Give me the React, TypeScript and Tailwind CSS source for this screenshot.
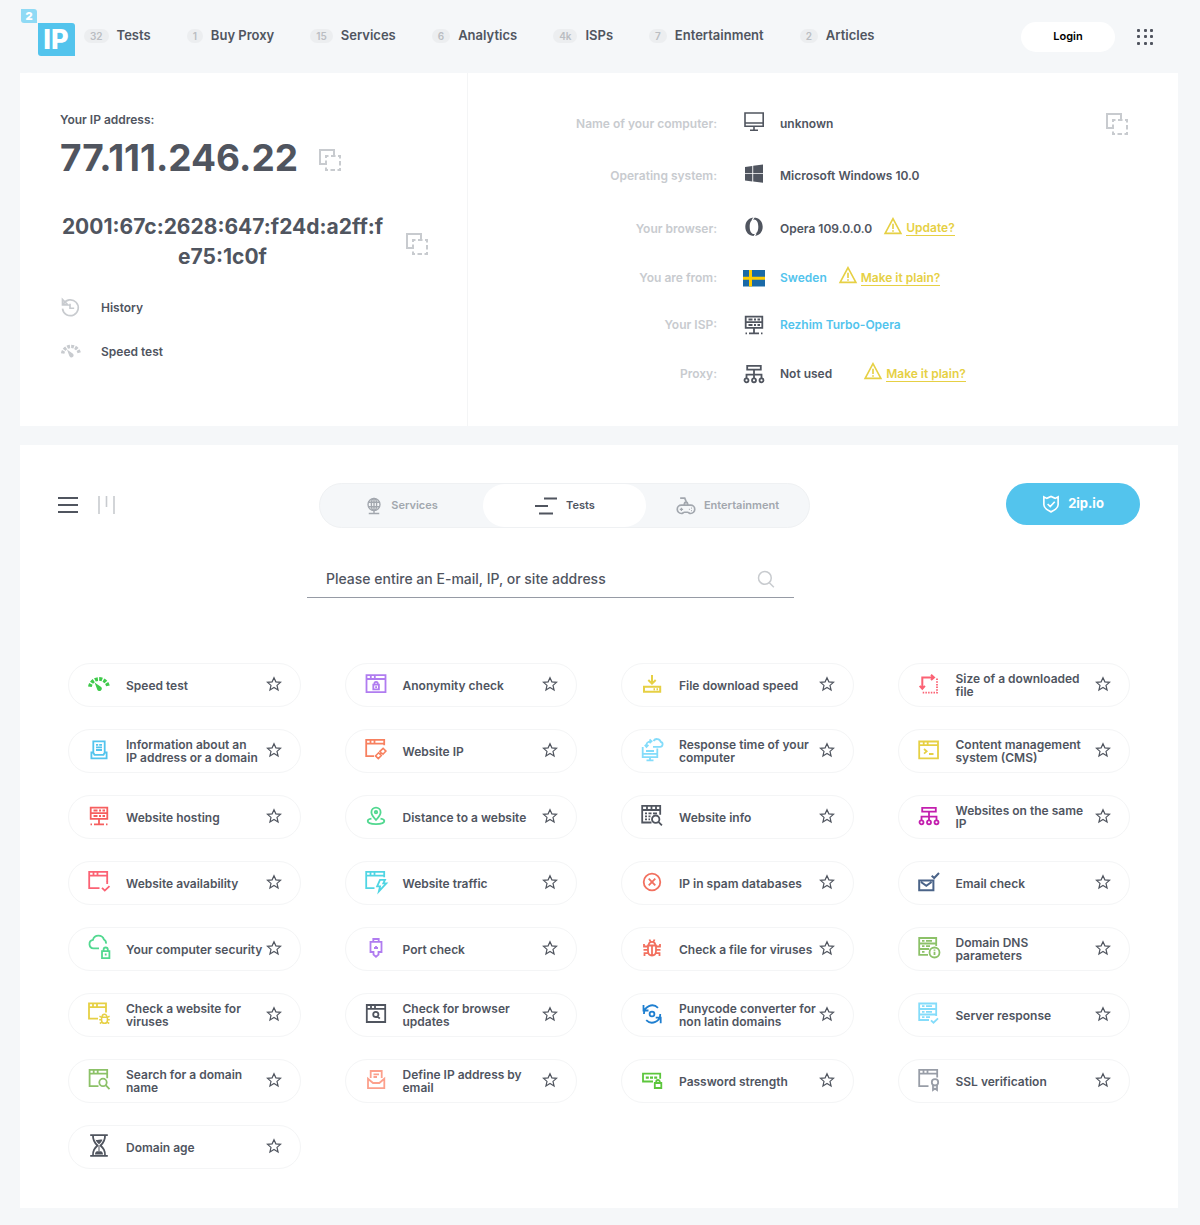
import React, { useState } from 'react';

interface IconProps {
  size?: number;
  className?: string;
  children: React.ReactNode;
}

const Icon: React.FC<IconProps> = ({ size = 24, className = '', children }) => (
  <svg
    width={size}
    height={size}
    viewBox="0 0 24 24"
    fill="none"
    stroke="currentColor"
    strokeWidth={1.8}
    aria-hidden="true"
    className={`shrink-0 overflow-visible ${className}`}
  >
    {children}
  </svg>
);

// browser window with the bottom right corner left open
const openWindow = (
  <path d="M12.5 18.2H2.2V1.8h18v9.7M2.2 5.6h18M6.5 1.8v3.8M10.5 1.8v3.8" />
);

const closedWindow = (
  <path d="M2.5 3.2h19v17h-19zM2.5 7h19M6.8 3.2V7M10.8 3.2V7" />
);

const lens = (
  <path d="M16 10.7a3.7 3.7 0 1 0 0 7.4a3.7 3.7 0 0 0 0-7.4zM18.7 17.1l3.8 4" />
);

const icons = {
  gauge: (
    <>
      <path d="M2.9 14.8a9.2 9.2 0 0 1 18.2 0" strokeWidth={3.8} strokeDasharray="3.1 1.3" />
      <path d="M7.6 10.4l6.2 4.3a2.4 2.4 0 1 1-3.6 2.8z" fill="currentColor" stroke="none" />
    </>
  ),
  document: (
    <>
      <path d="M6.3 14V3.4h11.4V14M9 6.8h2.2M12.2 6.8H15M9 9.4h6M9 12h6" />
      <path d="M6.2 14.5H4.4v5.8h15.2v-5.8h-1.8l-1.3 2.3H7.5z" />
    </>
  ),
  server: (
    <>
      <path d="M3.7 3.7h16.6v11.1H3.7zM3.7 9.2h16.6M12 15v5.2" />
      <path d="M6.5 6.5h4M12 6.5h2M15.5 6.5H18M6.5 12h4M12 12h2M15.5 12H18M3.5 20.3H5M7 20.3h10M19 20.3h1.5" />
    </>
  ),
  windowCheck: (
    <>
      {openWindow}
      <path d="M20.2 11v3M15 17.8l2.8 2.8 4.7-4.5" />
    </>
  ),
  cloudLock: (
    <>
      <path d="M12 12.4H6.5a4.3 4.3 0 0 1-.6-8.5A5.8 5.8 0 0 1 17 3.6a4.2 4.2 0 0 1 2 4" />
      <path d="M15 15.2h7.4v7H15zM16.6 15v-1.4a2.1 2.1 0 0 1 4.2 0V15M18.7 17.6v2" />
    </>
  ),
  windowBug: (
    <>
      <path d="M11 16.7H2V1.4h17v9M2 5.1h17M6 1.4v3.7M10 1.4v3.7" />
      <path
        d="M14.6 15.2h5.8v3.2a2.9 2.9 0 0 1-5.8 0zM15.2 14.6a2.3 2.3 0 0 1 4.6 0M12.4 14.3l2 .8M22.6 14.3l-2 .8M12.2 17.8h2.4M20.4 17.8h2.4M12.8 21.5l2-1.3M22.200 21.5l-2-1.3"
        strokeWidth={1.5}
      />
    </>
  ),
  windowLens: (
    <>
      <path d="M11.5 18.2H2.6V1.8h17.6v8.4M2.6 5.6h17.6M6.7 1.8v3.8M10.7 1.8v3.8" />
      {lens}
    </>
  ),
  hourglass: (
    <>
      <path d="M3.2 1.2h17.6M3.2 21.8h17.6M6 1.2c-.3 5.5 1.7 7.7 4.5 10.3C7.7 14.2 5.7 16.3 6 21.8M18 1.2c.3 5.5-1.7 7.7-4.5 10.3 2.8 2.7 4.8 4.8 4.5 10.3" />
      <path
        d="M8.5 5.5c2 1.5 4-.8 7 .3-.7 2-2 3-3.500 4.5-1.500-1.400-2.800-2.500-3.500-4.800zM8 20.500c.2-3.500 2-3.200 4-3.200s3.800-.3 4 3.200z"
        fill="currentColor"
        stroke="none"
      />
      <path d="M12 12v5" strokeWidth={1} />
    </>
  ),
  windowLock: (
    <>
      {closedWindow}
      <path d="M9.3 12.7h5.6v4.7H9.300zM10.400 12.500v-1a1.700 1.700 0 0 1 3.400 0v1M12.100 14.300v1.600" />
    </>
  ),
  windowLink: (
    <>
      <path d="M10 18.2H2.2V1.8h18v5.4M2.2 5.6h18M6.5 1.8v3.8M10.5 1.8v3.8" />
      <path
        d="M17.2 14.6l-1.300-1.300 3.200-3 2.800 2.800-2.900 3.100-1.300-1.200M16 16.300l1.300 1.200-3 3.100-2.800-2.700 3.100-3.100 1.200 1.200M15.600 16.800l2.300-2.200"
        strokeWidth={1.6}
      />
    </>
  ),
  pin: (
    <>
      <path d="M12 16c-2.500-2.700-4.600-5-4.600-7.800a4.600 4.600 0 0 1 9.200 0c0 2.800-2.100 5.100-4.600 7.800z" />
      <circle cx="12" cy="8.2" r="1.2" />
      <path d="M7.500 14.700c-2.300.4-3.800 1.200-3.800 2.300 0 1.800 3.600 3.100 8.300 3.100s8.300-1.300 8.300-3.100c0-1.100-1.500-1.900-3.800-2.300" />
    </>
  ),
  windowBolt: (
    <>
      <path d="M10.5 18.2H2.2V1.8h18v5.4M2.2 5.6h18M6.5 1.8v3.8M10.5 1.8v3.8" />
      <path d="M16 9.8h5l-1.700 3.500h3l-7.400 8 1.200-5h-3z" />
    </>
  ),
  port: (
    <path d="M9.300 5.500V3h5.400v2.500M6.500 5.800h11V16h-3v2.500l-2.500 2.300-2.500-2.300V16h-3zM10 12h4M12 10v2" />
  ),
  windowUpdate: (
    <>
      <path d="M2.8 3h18.4v17H2.8zM2.8 6.8h18.4M7 3v3.8M11 3v3.8" />
      <path d="M11.8 9.8a2.600 2.600 0 1 0 0 5.200a2.600 2.600 0 0 0 0-5.200zM13.600 14.400l2.200 2.300" />
    </>
  ),
  mailOpen: (
    <path d="M6.700 10V3h11v7M9.500 6.300H15M9.500 9H13M4 10.800v9.300h16.300v-9.300l-5 4.200H9z" />
  ),
  download: (
    <path
      d="M12 3v8.500M8.300 8l3.700 3.700L15.700 8M4 14.800h16.200v5H4zM13.500 17.300H15M16.500 17.300h1.500"
      strokeWidth={2}
    />
  ),
  response: (
    <>
      <path d="M2.700 9v10.200h14.600V10.500M2.700 15.800h14.600M10 19.500v3M6.500 22.300h7M6 13h8" />
      <path d="M13 8.800h7a2.500 2.500 0 0 0 .8-4.900A4 4 0 0 0 13.500 3M6.500 8.500c-.8-3 1.300-5.200 4.500-5.200M9.500 1.500l2 1.800-2 1.800M4.800 6.800l1.700 2 1.900-2" />
    </>
  ),
  windowInfo: (
    <>
      <path d="M11.500 18.500H2.200V1.800h18v9M2.200 6h18M7 1.800V6M11.500 1.800V6M16 1.800V6M5 9.300h2M8.500 9.300h3M13 9.300h4M5 12.300h2M8.500 12.300h2M5 15.300h2M8.500 15.300h1.500" />
      <path d="M15.700 11.500a3.700 3.700 0 1 0 0 7.400a3.700 3.700 0 0 0 0-7.400zM18.400 17.900l3.500 3.500" />
    </>
  ),
  cancel: (
    <>
      <circle cx="12" cy="12" r="8.300" />
      <path d="M8.700 8.700l6.600 6.600M15.300 8.700l-6.600 6.600" />
    </>
  ),
  bug: (
    <>
      <path d="M8 9.500h8V15c0 2.700-1.700 4.500-4 4.500S8 17.700 8 15zM8.700 9.300C8.700 7 10 5.800 12 5.800s3.300 1.200 3.300 3.500M12 9.500v10M9.500 3.500l1 2.300M14.500 3.500l-1 2.300" />
      <path d="M4 8v2.500h4M20 8v2.500h-4M3.500 13.800H8M20.500 13.800H16M4.500 20v-2.800h4M19.500 20v-2.800h-4" />
    </>
  ),
  punycode: (
    <>
      <path d="M4 12a8.200 8.200 0 0 1 14-6.200M20.200 12a8.200 8.200 0 0 1-14 6.200M3.500 3v5.500h5M20.700 21.200v-5.500h-5" />
      <circle cx="12" cy="12" r="2.400" />
    </>
  ),
  password: (
    <>
      <path d="M13 13.500H3V5.700h17.200v5" />
      <path d="M5.800 9.600h3M10 9.600h3M14.200 9.600h3" strokeWidth={2.200} />
      <path d="M14.800 15h6.500v5h-6.500zM16.200 14.800v-1a1.800 1.800 0 0 1 3.600 0v1" />
    </>
  ),
  fileSize: (
    <>
      <path d="M5.300 16V5.500h11M2.700 13.800l2.600 3 2.600-3M14 2.700l3 2.700-3 2.700" strokeWidth={2} />
      <path d="M20 6.500v14.200H4.500" strokeDasharray="1.500 1.200" />
    </>
  ),
  cms: (
    <>
      <path d="M2.200 3.500h18.800v16.800H2.200zM2.200 7.200h18.800M6.700 3.500v3.700M10.700 3.500v3.700" />
      <path d="M7 11l2.700 2.300L7 15.700M12 16h4.500" />
    </>
  ),
  network: (
    <>
      <path d="M5.200 3.800h13.600v3.800H5.200zM12 7.600v8.600M4.500 16.200v-3.500h15v3.500" />
      <circle cx="4.500" cy="18.300" r="2" />
      <circle cx="12" cy="18.300" r="2" />
      <circle cx="19.500" cy="18.300" r="2" />
    </>
  ),
  mailCheck: (
    <path d="M2.200 10.500h14.200v9.800H2.200zM4 12l5.300 3.800 5.300-3.800M14.700 5.700l2.500 2.300 4.800-5" strokeWidth={2} />
  ),
  dns: (
    <>
      <path d="M11 18.800H2.200V2h17v8M2.200 7.500h17M2.200 13h10M5 4.800h2.500M9 4.800h6M5 10.200h2.500M9 10.200h4M5 15.800h2.500" />
      <circle cx="17.500" cy="16.500" r="5" />
      <path d="M17.500 15.800v3.200M17.500 13.500v1.200" />
    </>
  ),
  serverCheck: (
    <>
      <path d="M12 18H2.200V1.500h17V14M2.200 7h17M2.200 12.500h17M5 4.200h2.500M9 4.200h6M5 9.800h2.500M9 9.800h6M5 15.200h2.500M9 15.200h4" />
      <path d="M14 18.300l2.500 2.400 4.500-4.300" />
    </>
  ),
  certificate: (
    <>
      <path d="M11.500 18.200H2.200V1.800h18v7.700M2.200 5.600h18M6.500 1.800v3.800M10.500 1.800v3.800" />
      <circle cx="18" cy="14.300" r="3.200" />
      <path d="M16 17v5l2-1.500 2 1.500v-5" />
    </>
  ),
  copy: (
    <>
      <path d="M8 16H2V2h14v5.500" strokeWidth={2} />
      <path d="M8 8h14v14H8z" strokeWidth={2} strokeDasharray="4.500 2.500" strokeDashoffset={2} />
    </>
  ),
  monitor: (
    <path d="M3 3h18.200v13.200H3zM3 13h18.200M12 16.500v3.500M8 20.300h8" strokeWidth={1.6} />
  ),
  windows: (
    <path
      d="M3 4.900l7.300-1v7.300H3zM11.200 3.800L21 2.500v8.700h-9.800zM3 12.100h7.300v7.300L3 18.400zM11.200 12.100H21v8.600l-9.800-1.300z"
      fill="currentColor"
      stroke="none"
    />
  ),
  opera: (
    <>
      <path
        d="M12 2.500c-5 0-8.700 4-8.700 9.300s3.700 9.300 8.700 9.300 8.700-4 8.700-9.300S17 2.500 12 2.500zm0 2c2.700 0 4.300 3 4.300 7.300s-1.600 7.300-4.300 7.300-4.300-3-4.300-7.300 1.600-7.300 4.300-7.300z"
        fill="currentColor"
        fillRule="evenodd"
        stroke="none"
      />
      <path d="M12.500 1.500l-2.500 4M11.500 22.300l2.500-4" stroke="#fff" strokeWidth={1.300} />
    </>
  ),
  sweden: (
    <>
      <path d="M1 4h22v16.500H1z" fill="#1a6aa7" stroke="none" />
      <path d="M8.500 4v16.500M1 12.200h22" stroke="#fecc00" strokeWidth={3} />
    </>
  ),
};

type IconName = keyof typeof icons;

interface NavItem {
  count: string;
  label: string;
}

const navItems: NavItem[] = [
  { count: '32', label: 'Tests' },
  { count: '1', label: 'Buy Proxy' },
  { count: '15', label: 'Services' },
  { count: '6', label: 'Analytics' },
  { count: '4k', label: 'ISPs' },
  { count: '7', label: 'Entertainment' },
  { count: '2', label: 'Articles' },
];

interface InfoItem {
  label: string;
  value: string;
  icon: IconName;
  height: string;
  raised?: boolean;
  link?: boolean;
  hint?: string;
  hintGap?: string;
}

const infoItems: InfoItem[] = [
  { label: 'Name of your computer:', value: 'unknown', icon: 'monitor', height: 'h-[53px]', raised: true },
  { label: 'Operating system:', value: 'Microsoft Windows 10.0', icon: 'windows', height: 'h-[52px]', raised: true },
  { label: 'Your browser:', value: 'Opera 109.0.0.0', icon: 'opera', height: 'h-[53px]', raised: true, hint: 'Update?', hintGap: 'ml-3' },
  { label: 'You are from:', value: 'Sweden', icon: 'sweden', height: 'h-[46px]', link: true, hint: 'Make it plain?', hintGap: 'ml-3' },
  { label: 'Your ISP:', value: 'Rezhim Turbo-Opera', icon: 'server', height: 'h-12', link: true },
  { label: 'Proxy:', value: 'Not used', icon: 'network', height: 'h-[50px]', hint: 'Make it plain?', hintGap: 'ml-8' },
];

interface Test {
  label: string;
  icon: IconName;
  color: string;
}

const tests: Test[] = [
  { label: 'Speed test', icon: 'gauge', color: 'text-[#3fca4b]' },
  { label: 'Anonymity check', icon: 'windowLock', color: 'text-[#b07cf0]' },
  { label: 'File download speed', icon: 'download', color: 'text-[#e6d044]' },
  { label: 'Size of a downloaded\nfile', icon: 'fileSize', color: 'text-[#fb6274]' },
  { label: 'Information about an\nIP address or a domain', icon: 'document', color: 'text-[#53c4ed]' },
  { label: 'Website IP', icon: 'windowLink', color: 'text-[#f7805f]' },
  { label: 'Response time of your\ncomputer', icon: 'response', color: 'text-[#84dcfa]' },
  { label: 'Content management\nsystem (CMS)', icon: 'cms', color: 'text-[#e6d044]' },
  { label: 'Website hosting', icon: 'server', color: 'text-[#f65e5e]' },
  { label: 'Distance to a website', icon: 'pin', color: 'text-[#52d890]' },
  { label: 'Website info', icon: 'windowInfo', color: 'text-[#50555f]' },
  { label: 'Websites on the same\nIP', icon: 'network', color: 'text-[#c31fae]' },
  { label: 'Website availability', icon: 'windowCheck', color: 'text-[#fb6274]' },
  { label: 'Website traffic', icon: 'windowBolt', color: 'text-[#50d5e3]' },
  { label: 'IP in spam databases', icon: 'cancel', color: 'text-[#f2705f]' },
  { label: 'Email check', icon: 'mailCheck', color: 'text-[#4a6388]' },
  { label: 'Your computer security', icon: 'cloudLock', color: 'text-[#52d890]' },
  { label: 'Port check', icon: 'port', color: 'text-[#b07cf0]' },
  { label: 'Check a file for viruses', icon: 'bug', color: 'text-[#f2705f]' },
  { label: 'Domain DNS\nparameters', icon: 'dns', color: 'text-[#8cc168]' },
  { label: 'Check a website for\nviruses', icon: 'windowBug', color: 'text-[#e6d044]' },
  { label: 'Check for browser\nupdates', icon: 'windowUpdate', color: 'text-[#50555f]' },
  { label: 'Punycode converter for\nnon latin domains', icon: 'punycode', color: 'text-[#1f7fd0]' },
  { label: 'Server response', icon: 'serverCheck', color: 'text-[#84dcfa]' },
  { label: 'Search for a domain\nname', icon: 'windowLens', color: 'text-[#8cc168]' },
  { label: 'Define IP address by\nemail', icon: 'mailOpen', color: 'text-[#fca08c]' },
  { label: 'Password strength', icon: 'password', color: 'text-[#5cc63c]' },
  { label: 'SSL verification', icon: 'certificate', color: 'text-[#989da7]' },
  { label: 'Domain age', icon: 'hourglass', color: 'text-[#50555f]' },
];

const Logo: React.FC = () => (
  <svg width="55" height="48" viewBox="0 0 55 48" aria-label="2IP" className="shrink-0">
    <path d="M3 0h10a3 3 0 0 1 3 3v11H3a3 3 0 0 1-3-3V0z" fill="#8fdaf5" />
    <path d="M17 14h34a3 3 0 0 1 3 3v30H20a3 3 0 0 1-3-3z" fill="#53c4ed" />
    <text x="8" y="11" textAnchor="middle" fontSize="11" fontWeight="900" fill="#fff">2</text>
    <text x="35" y="40" textAnchor="middle" fontSize="27" fontWeight="800" fill="#fff">IP</text>
  </svg>
);

const Header: React.FC = () => (
  <header className="flex items-center h-[73px] pr-6">
    <a href="#" className="ml-px mb-2">
      <Logo />
    </a>
    <nav className="flex items-center gap-9 ml-2 mb-px whitespace-nowrap">
      {navItems.map((item) => (
        <a key={item.label} href="#" className="flex items-center gap-2 text-[13px] font-semibold">
          <span className="px-[6px] rounded-full bg-[#eceef0] text-[#babdc2] text-[10px] leading-[14px]">
            {item.count}
          </span>
          {item.label}
        </a>
      ))}
    </nav>
    <button className="ml-auto w-[94px] h-[30px] rounded-full bg-white text-black text-[11px] font-semibold">
      Login
    </button>
    <button aria-label="Menu" className="ml-[22px]">
      <svg width="17" height="16" viewBox="0 0 17 16" fill="#50555f">
        {[0, 6, 13].map((y) =>
          [0, 7, 13].map((x) => <rect key={`${x}-${y}`} x={x} y={y} width="3" height="3" rx="1" />)
        )}
      </svg>
    </button>
  </header>
);

const CopyButton: React.FC<{ className?: string }> = ({ className = '' }) => (
  <button aria-label="Copy" className={`text-[#c8cbcf] ${className}`}>
    <Icon>{icons.copy}</Icon>
  </button>
);

const IpPanel: React.FC = () => (
  <div className="w-[448px] shrink-0 border-r border-[#f4f5f6] pl-10 pt-[39px]">
    <p className="text-[12px] leading-4 font-semibold">Your IP address:</p>
    <div className="flex items-center mt-2">
      <p className="text-[37px] leading-[44px] font-bold">77.111.246.22</p>
      <CopyButton className="ml-5 mt-1" />
    </div>
    <div className="flex items-center mt-8">
      <p className="w-[325px] text-center text-[21px] leading-[30px] font-bold">
        2001:67c:2628:647:f24d:a2ff:f<br />e75:1c0f
      </p>
      <CopyButton className="ml-5 mt-1" />
    </div>
    <a href="#" className="flex items-center h-11 mt-[14px] text-[12px] font-semibold">
      <Icon size={20} className="text-[#c8cbcf] mr-[21px] mb-[2px]">
        <path d="M4 8.500a9.500 9.500 0 1 1-1 5.500" strokeWidth={2} />
        <path d="M3 3v6.500h6.500zM12 8v5.500h5" strokeWidth={2} />
      </Icon>
      History
    </a>
    <a href="#" className="flex items-center h-11 text-[12px] font-semibold">
      <Icon size={22} className="text-[#c8cbcf] mr-[19px] mb-[2px]">{icons.gauge}</Icon>
      Speed test
    </a>
  </div>
);

const InfoPanel: React.FC = () => (
  <div className="relative flex-1 pt-6 pb-[27px] text-[12px] font-semibold">
    {infoItems.map((item) => (
      <div key={item.label} className={`flex items-center ${item.height}`}>
        <span className="w-[249px] text-right text-[#c8cbcf]">{item.label}</span>
        <Icon className={`ml-[25px] mr-[14px] ${item.raised ? 'mb-1' : ''}`}>{icons[item.icon]}</Icon>
        {item.link ? (
          <a href="#" className="text-[#53c4ed]">{item.value}</a>
        ) : (
          <span>{item.value}</span>
        )}
        {item.hint && (
          <a href="#" className={`flex items-center gap-1 text-[#e6d044] ${item.hintGap}`}>
            <Icon size={18} className="mb-[6px]">
              <path d="M12 2.200L1.500 21.800h21zM12 9v7M12 17.800v1.800" strokeWidth={2.200} />
            </Icon>
            <span className="border-b border-[#e6d044] leading-[14px]">{item.hint}</span>
          </a>
        )}
      </div>
    ))}
    <CopyButton className="absolute top-[39px] right-[49px]" />
  </div>
);

const tabs = [
  {
    label: 'Services',
    icon: (
      <Icon size={18}>
        <circle cx="12" cy="10" r="8" />
        <ellipse cx="12" cy="10" rx="3.500" ry="8" />
        <path d="M4.500 7h15M4.500 13h15M12 2v20M5 22h14" />
      </Icon>
    ),
  },
  {
    label: 'Tests',
    icon: (
      <Icon>
        <path d="M10 4.500h13M1 12h13M5 19.500h14" strokeWidth={1.800} />
      </Icon>
    ),
  },
  {
    label: 'Entertainment',
    icon: (
      <Icon size={20}>
        <path d="M6.500 11h11a5 5 0 0 1 0 10c-1.700 0-2.500-1.500-3.500-1.500h-4c-1 0-1.800 1.500-3.500 1.500a5 5 0 0 1 0-10zM5 2.500h5.500l2 5M9.500 11l1-3h3l1 3" strokeWidth={2} />
        <path d="M4.500 16h4M6.500 14v4M15.500 16h1M18 14.500h1M18 17.500h1" strokeWidth={1.500} />
      </Icon>
    ),
  },
];

const Toolbar: React.FC = () => {
  const [active, setActive] = useState('Tests');

  return (
    <div className="flex items-start px-[38px]">
      <div className="flex items-center gap-5 h-11">
        <button aria-label="List view">
          <svg width="20" height="16" viewBox="0 0 20 16" stroke="#50555f" strokeWidth="2">
            <path d="M0 1h20M0 8h20M0 15h20" />
          </svg>
        </button>
        <button aria-label="Column view">
          <svg width="17" height="18" viewBox="0 0 17 18" stroke="#c8cbcf" strokeWidth="1.600">
            <path d="M1 0v18M8.500 0v11M16 0v18" />
          </svg>
        </button>
      </div>
      <div className="flex w-[491px] h-[45px] ml-[204px] rounded-full border border-[#eff1f3] bg-[#f5f7f9]">
        {tabs.map((tab) => (
          <button
            key={tab.label}
            onClick={() => setActive(tab.label)}
            className={`flex flex-1 items-center justify-center gap-2 rounded-full text-[11px] font-semibold ${
              tab.label === active ? 'bg-white text-[#50555f]' : 'text-[#a2a7ae]'
            }`}
          >
            {tab.icon}
            {tab.label}
          </button>
        ))}
      </div>
      <a
        href="#"
        className="flex items-center justify-center gap-2 w-[134px] h-[42px] ml-auto rounded-full bg-[#53c4ed] text-white text-[13px] font-bold"
      >
        <Icon size={18}>
          <path d="M2.500 2.500l4 2L12 2l5.500 2.500 4-2V13c0 4.500-5 7.500-9.500 9.500C7.500 20.500 2.500 17.500 2.500 13zM7.500 12l3.500 3.500L17 9" strokeWidth={2.200} />
        </Icon>
        2ip.io
      </a>
    </div>
  );
};

const SearchBox: React.FC = () => (
  <label className="flex items-center w-[487px] h-10 ml-[287px] mt-[30px] pt-[2px] px-[19px] border-b border-[#969ba5]">
    <input
      type="text"
      aria-label="Address"
      placeholder="Please entire an E-mail, IP, or site address"
      className="flex-1 text-[14px] font-medium outline-none placeholder:text-[#50555f]"
    />
    <Icon size={18} className="text-[#c8cbcf]">
      <circle cx="10.500" cy="10.500" r="8.500" strokeWidth={2} />
      <path d="M16.500 17l6 6" strokeWidth={2} />
    </Icon>
  </label>
);

const TestCard: React.FC<{ test: Test }> = ({ test }) => (
  <div className="flex items-center h-11 px-[18px] rounded-full border border-[#f4f5f6]">
    <a href="#" className="flex flex-1 items-center gap-[15px] text-[12px] leading-[13px] font-semibold whitespace-pre">
      <Icon className={`mb-[2px] ${test.color}`}>{icons[test.icon]}</Icon>
      {test.label}
    </a>
    <button aria-label={`Add ${test.label} to favourites`} className="-ml-4 mb-[2px]">
      <Icon size={16}>
        <path d="M12 2.500l2.800 6.300 7 .7-5.300 4.600 1.600 6.800L12 17.300l-6.100 3.600 1.600-6.800-5.300-4.600 7-.7z" strokeWidth={1.800} />
      </Icon>
    </button>
  </div>
);

const App: React.FC = () => (
  <div className="min-h-screen bg-[#f5f7f9] pl-5 pr-[22px] pb-[17px] font-[Inter,sans-serif] text-[#50555f]">
    <Header />
    <section className="flex bg-white">
      <IpPanel />
      <InfoPanel />
    </section>
    <section className="mt-[19px] pt-[38px] pb-[39px] bg-white">
      <Toolbar />
      <SearchBox />
      <div className="grid grid-cols-4 gap-x-11 gap-y-[22px] mt-[65px] px-12">
        {tests.map((test) => (
          <TestCard key={test.label} test={test} />
        ))}
      </div>
    </section>
  </div>
);

export default App;
